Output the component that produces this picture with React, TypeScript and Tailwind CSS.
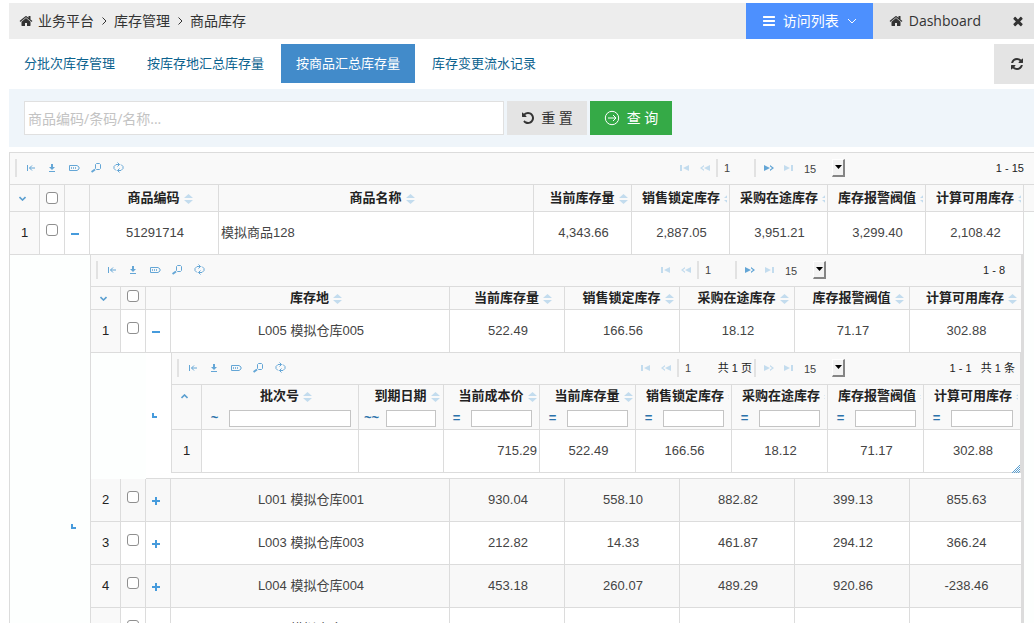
import { clsx } from 'clsx';
import type { ReactNode } from 'react';

const FA_PATHS = {
  home: 'M1472 992v480q0 26-19 45t-45 19h-384v-384h-256v384h-384q-26 0-45-19t-19-45v-480q0-1 .5-3t.5-3l575-474 575 474q1 2 1 6zm223-69l-62 74q-8 9-21 11h-3q-13 0-21-7l-692-577-692 577q-12 8-24 7-13-2-21-11l-62-74q-8-10-7-23.5t11-21.5l719-599q32-26 76-26t76 26l244 204v-195q0-14 9-23t23-9h192q14 0 23 9t9 23v408l219 182q10 8 11 21.5t-7 23.5z',
  times:
    'M1490 1322q0 40-28 68l-136 136q-28 28-68 28t-68-28l-294-294-294 294q-28 28-68 28t-68-28l-136-136q-28-28-28-68t28-68l294-294-294-294q-28-28-28-68t28-68l136-136q28-28 68-28t68 28l294 294 294-294q28-28 68-28t68 28l136 136q28 28 28 68t-28 68l-294 294 294 294q28 28 28 68z',
  bars: 'M1664 1344v128q0 26-19 45t-45 19h-1408q-26 0-45-19t-19-45v-128q0-26 19-45t45-19h1408q26 0 45 19t19 45zm0-512v128q0 26-19 45t-45 19h-1408q-26 0-45-19t-19-45v-128q0-26 19-45t45-19h1408q26 0 45 19t19 45zm0-512v128q0 26-19 45t-45 19h-1408q-26 0-45-19t-19-45v-128q0-26 19-45t45-19h1408q26 0 45 19t19 45z',
  refresh:
    'M1639 1056q0 5-1 7-64 268-268 434.5t-478 166.5q-146 0-282.5-55t-243.5-157l-129 129q-19 19-45 19t-45-19-19-45v-448q0-26 19-45t45-19h448q26 0 45 19t19 45-19 45l-137 137q71 66 161 102t187 36q134 0 250-65t186-179q11-17 53-117 8-23 30-23h192q13 0 22.5 9.5t9.5 22.5zm25-800v448q0 26-19 45t-45 19h-448q-26 0-45-19t-19-45 19-45l138-138q-148-137-349-137-134 0-250 65t-186 179q-11 17-53 117-8 23-30 23h-199q-13 0-22.5-9.5t-9.5-22.5v-7q65-268 270-434.5t480-166.5q146 0 284 55.5t245 156.5l130-129q19-19 45-19t45 19 19 45z',
  undo: 'M1664 896q0 156-61 298t-164 245-245 164-298 61q-172 0-327-72.5t-264-204.5q-7-10-6.5-22.5t8.5-20.5l137-138q10-9 25-9 16 2 23 12 73 95 179 147t225 52q104 0 198.5-40.5t163.5-109.5 109.5-163.5 40.5-198.5-40.5-198.5-109.5-163.5-163.5-109.5-198.5-40.5q-98 0-188 35.5t-160 101.5l137 138q31 30 14 69-17 40-59 40h-448q-26 0-45-19t-19-45v-448q0-42 40-59 39-17 69 14l130 129q107-101 244.5-156.5t284.5-55.5q156 0 298 61t245 164 164 245 61 298z',
};

const FaIcon = ({ name }: { name: keyof typeof FA_PATHS }) => (
  <svg viewBox="0 0 1792 1792" className="size-[14px] shrink-0 fill-current">
    <path d={FA_PATHS[name]} />
  </svg>
);

const Angle = ({ down = false }: { down?: boolean }) => (
  <svg
    viewBox="0 0 10 10"
    className="size-[10px] shrink-0 fill-none stroke-current"
  >
    <path d={down ? 'M1 3l4 4 4-4' : 'M3.5 1.5l3.5 3.5-3.5 3.5'} />
  </svg>
);

const TOOLS: { label: string; icon: ReactNode }[] = [
  { label: '收起', icon: <path d="M2.5 3v6M10 6H4.5M7 3.5L4.5 6 7 8.5" /> },
  {
    label: '导出',
    icon: (
      <>
        <path d="M5 2v3" strokeWidth="2" />
        <path d="M2 9.5h6" />
        <path d="M2 5h6L5 8z" fill="currentColor" stroke="none" />
      </>
    ),
  },
  {
    label: '列设置',
    icon: (
      <>
        <path d="M.5 3.5h7.5l2 1.5v2l-2 1.5H.5z" />
        <path d="M2.5 5v2M4.5 5v2M6.5 5v2" strokeOpacity="0.8" />
      </>
    ),
  },
  {
    label: '搜索',
    icon: (
      <>
        <path d="M4.5 2.5l1-1h3l1 1v4l-1 1h-3l-1-1z" />
        <path d="M4 7.5L.5 10" strokeWidth="2" />
      </>
    ),
  },
  {
    label: '刷新',
    icon: (
      <path d="M3 8.5L1 6.5V4.5L3 2.5H6.5M4.5.5l2 2-2 2M8 2.5l2 2v2L8 8.5H4.5M6.5 6.5l-2 2 2 2" />
    ),
  },
];

const PAGE_ICONS = {
  first: 'M0 1h2v6H0zM9 1v6L3 4z',
  prev: 'M4 1L0 4l4 3V5.5L2 4l2-1.5zM10 1v6L4 4z',
  next: 'M0 1v6l6-3zM6 1l4 3-4 3V5.5L8 4 6 2.5z',
  last: 'M0 1v6l6-3zM7 1h2v6H7z',
};

const PageButton = ({
  name,
  label,
  active = false,
}: {
  name: keyof typeof PAGE_ICONS;
  label: string;
  active?: boolean;
}) => (
  <button
    type="button"
    aria-label={label}
    className={clsx(
      'flex h-5 w-5 items-center justify-center',
      active ? 'text-[#64a6d6]' : 'text-[#c3dcee]'
    )}
  >
    <svg viewBox="0 0 10 8" className="h-2 w-[10px] fill-current">
      <path d={PAGE_ICONS[name]} />
    </svg>
  </button>
);

const Divider = () => <span className="h-[18px] w-[2px] bg-[#e2e2e2]" />;

type ToolbarProps = {
  range: string;
  rangeClass: string;
  pages?: string;
  single?: boolean;
};

const Toolbar = ({ range, rangeClass, pages, single }: ToolbarProps) => (
  <div className="flex h-8 items-center border-[#dcdcdc] border-b bg-[#f9f9f9] pb-[2px] text-[11px] text-[#444]">
    <div className="flex items-center gap-[2px] pl-[5px]">
      <Divider />
      <div className="flex">
        {TOOLS.map((tool) => (
          <button
            key={tool.label}
            type="button"
            aria-label={tool.label}
            className="flex h-5 w-[22px] items-center justify-center text-[#64a6d6]"
          >
            <svg
              viewBox="0 0 11 11"
              className="size-[11px] fill-none stroke-current"
            >
              {tool.icon}
            </svg>
          </button>
        ))}
      </div>
    </div>
    <div className="ml-auto flex items-center">
      <PageButton name="first" label="首页" />
      <PageButton name="prev" label="上一页" />
      <span className="w-px" />
      <Divider />
      <input
        aria-label="页码"
        defaultValue="1"
        className="w-[36px] bg-transparent pl-[6px] outline-none"
      />
      {pages && (
        <span className="w-[39px] whitespace-nowrap pr-[2px] text-right text-[#222]">
          {pages}
        </span>
      )}
      <Divider />
      <span className="w-[3px]" />
      <PageButton name="next" label="下一页" active={!single} />
      <PageButton name="last" label="末页" />
      <div className="relative ml-[5px] h-[18px] w-[41px]">
        <select
          aria-label="每页条数"
          className="block h-[14px] w-full appearance-none bg-transparent outline-none"
        >
          <option>15</option>
        </select>
        <span className="pointer-events-none absolute top-0 right-0 flex h-[18px] w-[13px] items-center justify-center border-white border-t border-r-2 border-b-2 border-l border-r-[#858585] border-b-[#858585] bg-[#f3f3f3]">
          <svg viewBox="0 0 7 4" className="h-1 w-[7px] fill-black">
            <path d="M0 0h7L3.5 4z" />
          </svg>
        </span>
      </div>
    </div>
    <div className={clsx('whitespace-pre text-right text-[#222]', rangeClass)}>
      {range}
    </div>
  </div>
);

const Th = ({ children }: { children?: ReactNode }) => (
  <th className="border-[#dcdcdc] border-r border-b bg-[#f9f9f9] p-0 font-bold text-[#222] last:border-r-0">
    {children}
  </th>
);

const Td = ({
  children,
  className,
}: {
  children?: ReactNode;
  className?: string;
}) => (
  <td
    className={clsx(
      'border-[#dcdcdc] border-r border-b last:border-r-0',
      className ?? 'p-0 pl-[2px] text-center'
    )}
  >
    {children}
  </td>
);

const SortTitle = ({ title }: { title: string }) => (
  <div className="whitespace-nowrap pr-[2px] pl-[10px] text-center leading-5">
    <div className="overflow-hidden">
      {title}
      <svg
        viewBox="0 0 9 10"
        className="-mr-1 ml-1 inline h-[10px] w-[9px] fill-[#c3dcee]"
      >
        <path d="M4.5 0L9 4H0zM0 6h9L4.5 10z" />
      </svg>
    </div>
  </div>
);

const FoldIcon = ({ up = false }: { up?: boolean }) => (
  <button
    type="button"
    aria-label="折叠"
    className="flex w-full justify-center pr-1 text-[#5b9fd0]"
  >
    <svg viewBox="0 0 7 5" className="h-[5px] w-[7px] fill-none stroke-current">
      <path d={up ? 'M.5 4l3-3 3 3' : 'M.5 1l3 3 3-3'} strokeWidth="1.6" />
    </svg>
  </button>
);

const Checkbox = ({ label }: { label: string }) => (
  <input
    type="checkbox"
    aria-label={label}
    className="mx-auto block size-3 appearance-none rounded-[3px] border border-[#8f8f8f] bg-white"
  />
);

const ExpandButton = ({ open = false }: { open?: boolean }) => (
  <button
    type="button"
    aria-label={open ? '收起' : '展开'}
    className="flex w-full justify-center pt-[2px] pr-[5px]"
  >
    <svg viewBox="0 0 8 8" className="size-2 fill-[#469bdc]">
      <path d={open ? 'M0 3h8v2H0z' : 'M0 3h3V0h2v3h3v2H5v3H3V5H0z'} />
    </svg>
  </button>
);

const Corner = () => (
  <svg viewBox="0 0 5 5" className="ml-[6px] block size-[5px] fill-[#469bdc]">
    <path d="M0 0h2v3h3v2H0z" />
  </svg>
);

const QTY_TITLES = [
  '当前库存量',
  '销售锁定库存',
  '采购在途库存',
  '库存报警阀值',
  '计算可用库存',
];

const BATCH_COLUMNS = [
  { title: '批次号', op: '~' },
  { title: '到期日期', op: '~~' },
  { title: '当前成本价', op: '=' },
  ...QTY_TITLES.map((title) => ({ title, op: '=' })),
];

const WAREHOUSES = [
  {
    name: 'L005 模拟仓库005',
    values: ['522.49', '166.56', '18.12', '71.17', '302.88'],
  },
  {
    name: 'L001 模拟仓库001',
    values: ['930.04', '558.10', '882.82', '399.13', '855.63'],
  },
  {
    name: 'L003 模拟仓库003',
    values: ['212.82', '14.33', '461.87', '294.12', '366.24'],
  },
  {
    name: 'L004 模拟仓库004',
    values: ['453.18', '260.07', '489.29', '920.86', '-238.46'],
  },
  {
    name: 'L006 模拟仓库006',
    values: ['318.40', '120.35', '275.16', '188.02', '473.21'],
  },
];

const TABLE = 'w-full table-fixed border-separate border-spacing-0';

const BatchGrid = () => (
  <div className="relative border-[#dcdcdc] border-r border-l">
    <Toolbar
      range="1 - 1   共 1 条"
      rangeClass="w-[175px] pr-[5px]"
      pages="共 1 页"
      single
    />
    <table className={TABLE}>
      <colgroup>
        <col className="w-[30px]" />
        <col />
        <col className="w-[85px]" />
        {['cost', ...QTY_TITLES].map((key) => (
          <col key={key} className="w-[96px]" />
        ))}
      </colgroup>
      <thead>
        <tr className="h-[45px] align-top">
          <Th>
            <div className="pt-[9px]">
              <FoldIcon up />
            </div>
          </Th>
          {BATCH_COLUMNS.map(({ title, op }) => (
            <Th key={title}>
              <div className="pt-px">
                <SortTitle title={title} />
              </div>
              <div className="flex h-[21px] items-center pt-[3px] pr-[7px]">
                <span className="w-[25px] shrink-0 text-center text-[#2c72ab]">
                  {op}
                </span>
                <input
                  aria-label={title}
                  className="ml-[2px] h-[17px] w-full min-w-0 border border-[#c4c4c4] bg-white px-1 font-normal text-[11px]"
                />
              </div>
            </Th>
          ))}
        </tr>
      </thead>
      <tbody>
        <tr className="h-[43px]">
          <Td className="bg-[#f9f9f9] p-0 text-center text-[#222]">1</Td>
          <Td />
          <Td />
          <Td className="p-0 pr-[2px] text-right">715.29</Td>
          {WAREHOUSES[0].values.map((value) => (
            <Td key={value}>{value}</Td>
          ))}
        </tr>
      </tbody>
    </table>
    <svg
      viewBox="0 0 8 8"
      className="absolute right-0 bottom-0 size-2 fill-none stroke-[#5b9fd0]"
    >
      <path d="M0 8l8-8M2 8l6-6M4 8l4-4M6 8l2-2" />
    </svg>
  </div>
);

const WarehouseGrid = () => (
  <div className="border-[#dcdcdc] border-r-2 border-l">
    <Toolbar range="1 - 8" rangeClass="w-[195px] pr-4" />
    <table className={TABLE}>
      <colgroup>
        <col className="w-[30px]" />
        <col className="w-[25px]" />
        <col className="w-[25px]" />
        <col />
        {QTY_TITLES.slice(1).map((title) => (
          <col key={title} className="w-[115px]" />
        ))}
        <col className="w-[111px]" />
      </colgroup>
      <thead>
        <tr className="h-[23px]">
          <Th>
            <FoldIcon />
          </Th>
          <Th>
            <div className="pb-1">
              <Checkbox label="全选库存地" />
            </div>
          </Th>
          <Th />
          {['库存地', ...QTY_TITLES].map((title) => (
            <Th key={title}>
              <SortTitle title={title} />
            </Th>
          ))}
        </tr>
      </thead>
      {WAREHOUSES.map(({ name, values }, index) => (
        <tbody key={name}>
          <tr className={clsx('h-[43px]', index % 2 === 1 && 'bg-[#f8f8f8]')}>
            <Td className="bg-[#f9f9f9] p-0 text-center text-[#222]">
              {index + 1}
            </Td>
            <Td className="p-0 pb-[6px]">
              <Checkbox label={name} />
            </Td>
            <Td className="p-0">
              <ExpandButton open={index === 0} />
            </Td>
            <Td>{name}</Td>
            {values.map((value) => (
              <Td key={value}>{value}</Td>
            ))}
          </tr>
          {index === 0 && (
            <tr>
              <td colSpan={2} className="bg-[#fdfffe] p-0" />
              <td className="border-[#dcdcdc] border-b p-0">
                <Corner />
              </td>
              <td
                colSpan={6}
                className="border-[#dcdcdc] border-b p-0 pb-[5px]"
              >
                <BatchGrid />
              </td>
            </tr>
          )}
        </tbody>
      ))}
    </table>
  </div>
);

const ProductGrid = () => (
  <div className="border-[#dcdcdc] border-t border-l">
    <Toolbar range="1 - 15" rangeClass="w-[189px] pr-[10px]" />
    <table className={TABLE}>
      <colgroup>
        <col className="w-[30px]" />
        <col className="w-[25px]" />
        <col className="w-[25px]" />
        <col className="w-[129px]" />
        <col />
        {QTY_TITLES.map((title) => (
          <col key={title} className="w-[98px]" />
        ))}
        <col className="w-[10px]" />
      </colgroup>
      <thead>
        <tr className="h-[27px]">
          <Th>
            <FoldIcon />
          </Th>
          <Th>
            <Checkbox label="全选商品" />
          </Th>
          <Th />
          {['商品编码', '商品名称', ...QTY_TITLES].map((title) => (
            <Th key={title}>
              <SortTitle title={title} />
            </Th>
          ))}
          <Th />
        </tr>
      </thead>
      <tbody>
        <tr className="h-[43px]">
          <Td className="bg-[#f9f9f9] p-0 text-center text-[#222]">1</Td>
          <Td className="p-0 pb-[6px]">
            <Checkbox label="模拟商品128" />
          </Td>
          <Td className="p-0">
            <ExpandButton open />
          </Td>
          <Td>51291714</Td>
          <Td className="p-0 pl-[2px]">模拟商品128</Td>
          {['4,343.66', '2,887.05', '3,951.21', '3,299.40', '2,108.42'].map(
            (value) => (
              <Td key={value}>{value}</Td>
            )
          )}
          <td className="bg-[#fdfffe] p-0" />
        </tr>
        <tr className="align-top">
          <td colSpan={2} className="bg-[#fdfffe] p-0" />
          <td className="bg-[#fdfffe] p-0 pt-[269px]">
            <Corner />
          </td>
          <td colSpan={7} className="border-[#dcdcdc] border-r p-0">
            <WarehouseGrid />
          </td>
          <td className="bg-[#fdfffe] p-0" />
        </tr>
      </tbody>
    </table>
  </div>
);

const TABS = [
  '分批次库存管理',
  '按库存地汇总库存量',
  '按商品汇总库存量',
  '库存变更流水记录',
];

const Header = () => (
  <header className="flex h-9 bg-[#ededed] text-[#333] text-sm">
    <nav className="flex items-center gap-[5px] pl-[10px]">
      <FaIcon name="home" />
      <a href="#platform">业务平台</a>
      <Angle />
      <a href="#stock">库存管理</a>
      <Angle />
      <span>商品库存</span>
    </nav>
    <div className="ml-auto flex">
      <button
        type="button"
        className="flex items-center bg-[#4d90fe] px-4 text-white"
      >
        <FaIcon name="bars" />
        <span className="pr-2 pl-[7px]">访问列表</span>
        <Angle down />
      </button>
      <a
        href="#dashboard"
        className="flex items-center gap-[6px] bg-[#e4e4e4] pr-[13px] pl-4"
      >
        <FaIcon name="home" />
        Dashboard
      </a>
      <button
        type="button"
        aria-label="关闭"
        className="flex w-10 items-center justify-end bg-[#e4e4e4] pr-[9px]"
      >
        <FaIcon name="times" />
      </button>
    </div>
  </header>
);

const SearchBar = () => (
  <form className="flex gap-[3px] bg-[#eff5fa] py-3 pl-[15px] text-sm">
    <input
      aria-label="商品编码/条码/名称"
      placeholder="商品编码/条码/名称..."
      className="h-[34px] w-[480px] border border-[#e0e0e0] bg-white px-[3px] outline-none placeholder:text-[#c3c3c3]"
    />
    <button
      type="reset"
      className="flex w-20 items-center justify-center gap-[6px] bg-[#e4e4e4] text-[#333]"
    >
      <FaIcon name="undo" />重 置
    </button>
    <button
      type="submit"
      className="flex w-[82px] items-center justify-center gap-[7px] bg-[#35aa47] text-white"
    >
      <svg
        viewBox="0 0 16 16"
        className="size-4 shrink-0 fill-none stroke-current"
      >
        <circle cx="8" cy="8" r="6.7" />
        <path d="M4 8h8M9 5l3 3-3 3" />
      </svg>
      查 询
    </button>
  </form>
);

export default function App() {
  return (
    <div className="h-screen overflow-hidden bg-white pt-[3px] pl-[9px] font-['Open_Sans','Noto_Sans_CJK_SC',sans-serif]">
      <Header />
      <div className="flex py-[5px] text-[13px]">
        <nav className="flex h-[39px] gap-[2px]">
          {TABS.map((tab) => (
            <a
              key={tab}
              href="#tab"
              className={clsx(
                'flex items-center px-[15px]',
                tab === '按商品汇总库存量'
                  ? 'bg-[#428bca] text-white'
                  : 'text-[#0d638f]'
              )}
            >
              {tab}
            </a>
          ))}
        </nav>
        <button
          type="button"
          aria-label="刷新"
          className="ml-auto flex size-10 items-center justify-center bg-[#e4e4e4] pl-[6px] text-[#333]"
        >
          <FaIcon name="refresh" />
        </button>
      </div>
      <SearchBar />
      <main className="pt-[5px] font-['Liberation_Sans','Noto_Sans_CJK_SC',sans-serif] text-[#444] text-[13px] leading-5">
        <ProductGrid />
      </main>
    </div>
  );
}
